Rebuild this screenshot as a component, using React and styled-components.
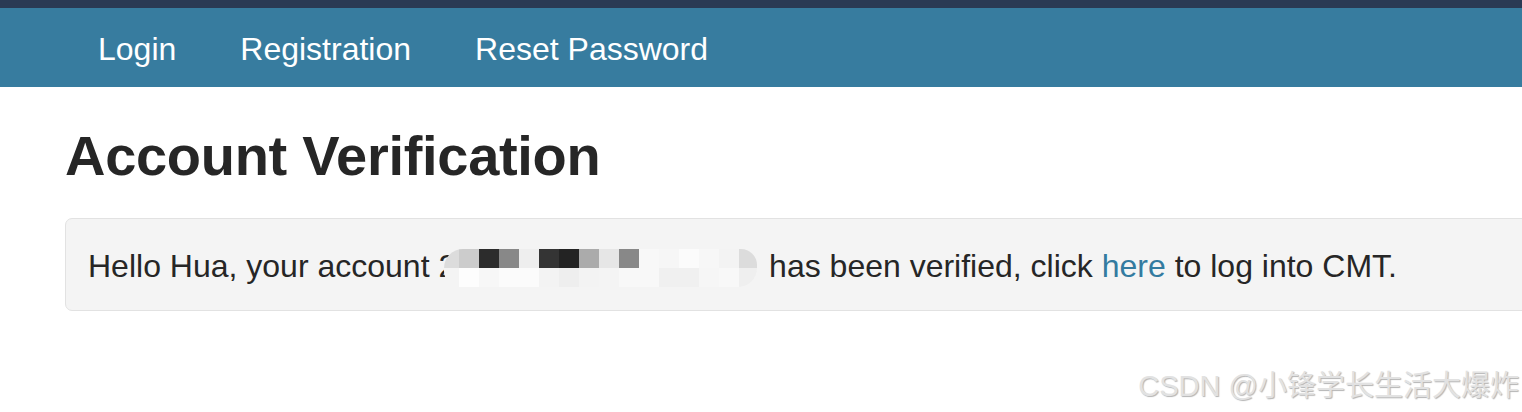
import React from "react";
import styled, { createGlobalStyle } from "styled-components";

const Global = createGlobalStyle`
  html, body { margin: 0; padding: 0; background: #fff; overflow: hidden; }
  body { font-family: "Liberation Sans", Arial, Helvetica, sans-serif; color: #262626; }
`;

const Page = styled.div`
  position: relative;
  width: 1522px;
  height: 412px;
  overflow: hidden;
`;

const TopStrip = styled.div`
  height: 8px;
  background: #2a3a54;
`;

const NavBar = styled.nav`
  height: 79px;
  background: #377c9f;
  display: flex;
  align-items: stretch;
  padding-left: 66px;
`;

const NavItem = styled.a`
  display: flex;
  align-items: center;
  padding: 2px 32px 0;
  color: #fff;
  font-size: 32px;
  text-decoration: none;
  line-height: 1;
`;

const Content = styled.main`
  padding: 0 0 0 65px;
`;

const Title = styled.h1`
  margin: 38px 0 32px;
  font-size: 56px;
  line-height: 61px;
  font-weight: 700;
  color: #262626;
  letter-spacing: -0.3px;
`;

const Well = styled.div`
  margin-right: -40px;
  background: #f4f4f4;
  border: 1px solid #e2e2e2;
  border-radius: 7px;
  padding: 24px 22px 21px;
  font-size: 32px;
  line-height: 46px;
  color: #262626;
  white-space: nowrap;
`;

const Link = styled.a`
  color: #337ba0;
  text-decoration: none;
`;

const Mosaic = styled.span`
  display: inline-block;
  vertical-align: -10px;
  margin-left: -12px;
  margin-right: 3px;
  line-height: 0;
  border-radius: 19px 16px 19px 16px;
  overflow: hidden;
`;

const MosaicGrid = styled.span`
  display: grid;
  grid-template-columns: 15px repeat(14, 20px) 18px;
  grid-template-rows: 19px 19px;
`;

const Cell = styled.span`
  background: ${(p) => p.$c};
`;

const Watermark = styled.div`
  position: absolute;
  right: 3px;
  bottom: 8px;
  font-family: "Liberation Sans", "Noto Sans CJK SC", sans-serif;
  font-size: 29px;
  color: #e2e2e2;
  text-shadow: 1px 1px 1px #b4b4b4;
  white-space: nowrap;
`;

const row1 = [
  "#dcdcdc", "#cccccc", "#2c2c2c", "#888888", "#eeeeee", "#343434", "#232323",
  "#ababab", "#e6e6e6", "#888888", "#f8f8f8", "#f6f6f6", "#fbfbfb", "#f7f7f7",
  "#f3f3f3", "#dcdcdc",
];
const row2 = [
  "#f4f4f4", "#fdfdfd", "#f7f7f7", "#fbfbfb", "#fbfbfb", "#f3f3f3", "#eeeeee",
  "#f3f3f3", "#f4f4f4", "#f8f8f8", "#f8f8f8", "#f0f0f0", "#f0f0f0", "#f6f6f6",
  "#f8f8f8", "#efefef",
];

export default function App() {
  return (
    <Page>
      <Global />
      <TopStrip />
      <NavBar>
        <NavItem href="#">Login</NavItem>
        <NavItem href="#">Registration</NavItem>
        <NavItem href="#">Reset Password</NavItem>
      </NavBar>
      <Content>
        <Title>Account Verification</Title>
        <Well>
          Hello Hua, your account 2
          <Mosaic aria-hidden="true">
            <MosaicGrid>
              {row1.map((c, i) => (
                <Cell key={"a" + i} $c={c} />
              ))}
              {row2.map((c, i) => (
                <Cell key={"b" + i} $c={c} />
              ))}
            </MosaicGrid>
          </Mosaic>
          {" "}has been verified, click <Link href="#">here</Link> to log into CMT.
        </Well>
      </Content>
      <Watermark>CSDN @小锋学长生活大爆炸</Watermark>
    </Page>
  );
}
